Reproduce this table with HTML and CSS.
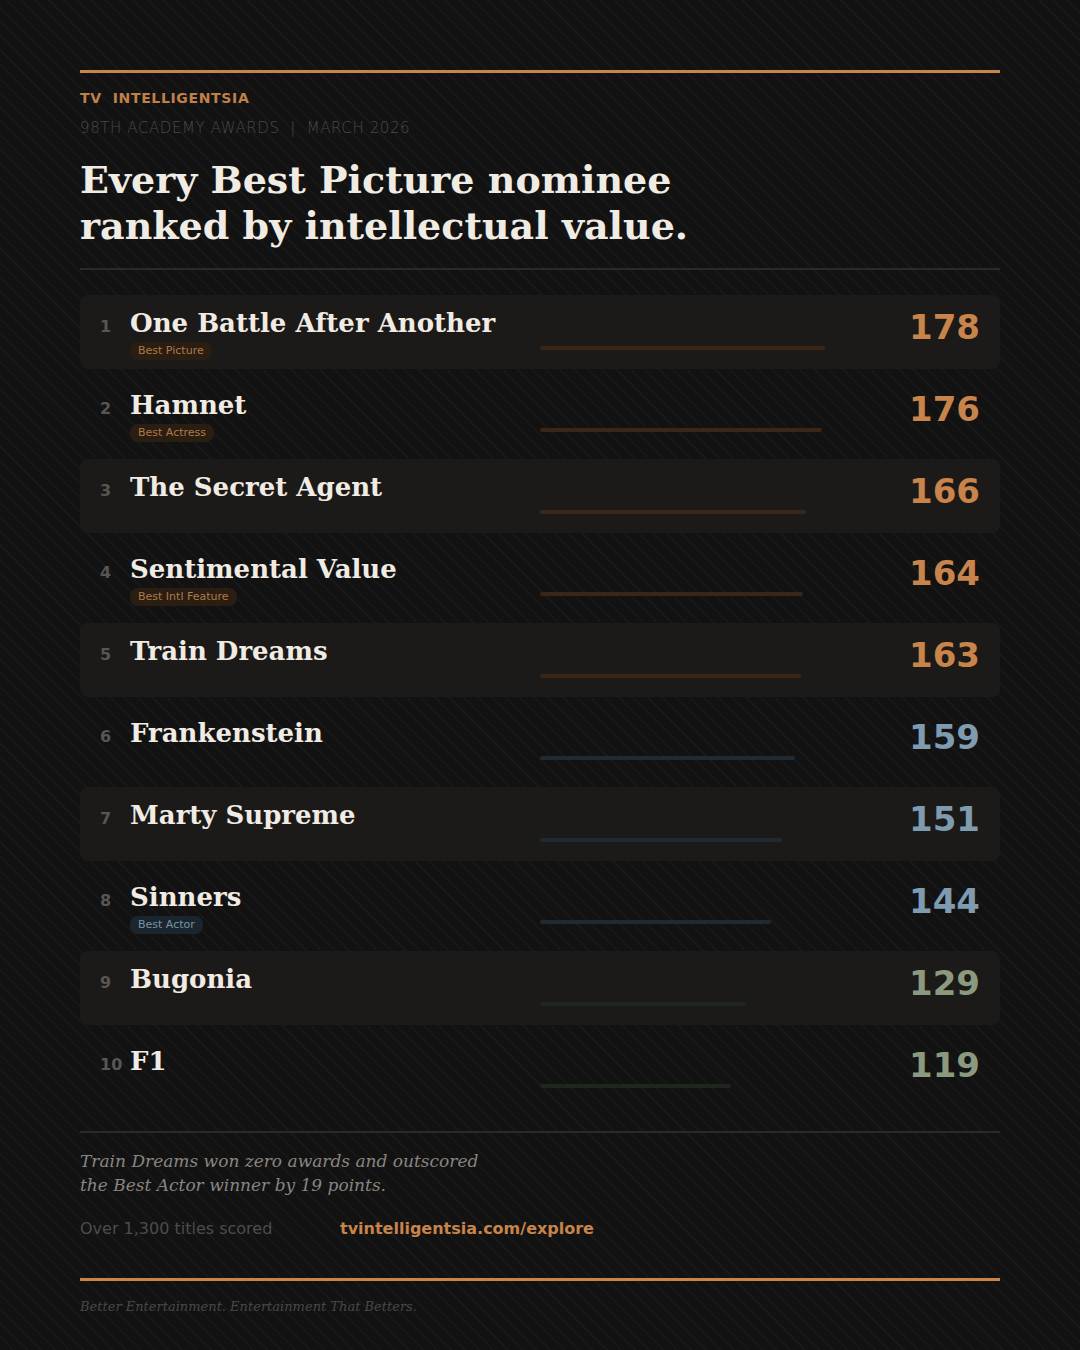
FILE: index.html
```html
<!DOCTYPE html>
<html>
<head>
<meta charset="utf-8">
<link rel="stylesheet" href="styles.css">
</head>
<body>
<div class="page">
  <div class="rule-top"></div>
  <div class="brand">TV&nbsp; INTELLIGENTSIA</div>
  <div class="sub">98TH ACADEMY AWARDS &nbsp;|&nbsp; MARCH 2026</div>
  <h1 class="title">Every Best Picture nominee<br>ranked by intellectual value.</h1>
  <div class="divider"></div>

  <div class="list">
    <div class="row shade">
      <div class="rank">1</div>
      <div class="name"><div class="film">One Battle After Another</div><span class="badge">Best Picture</span></div>
      <div class="bar-wrap"><div class="bar orange" style="width:285px"></div></div>
      <div class="score orange">178</div>
    </div>
    <div class="row">
      <div class="rank">2</div>
      <div class="name"><div class="film">Hamnet</div><span class="badge">Best Actress</span></div>
      <div class="bar-wrap"><div class="bar orange" style="width:282px"></div></div>
      <div class="score orange">176</div>
    </div>
    <div class="row shade">
      <div class="rank">3</div>
      <div class="name"><div class="film">The Secret Agent</div></div>
      <div class="bar-wrap"><div class="bar orange" style="width:266px"></div></div>
      <div class="score orange">166</div>
    </div>
    <div class="row">
      <div class="rank">4</div>
      <div class="name"><div class="film">Sentimental Value</div><span class="badge">Best Intl Feature</span></div>
      <div class="bar-wrap"><div class="bar orange" style="width:263px"></div></div>
      <div class="score orange">164</div>
    </div>
    <div class="row shade">
      <div class="rank">5</div>
      <div class="name"><div class="film">Train Dreams</div></div>
      <div class="bar-wrap"><div class="bar orange" style="width:261px"></div></div>
      <div class="score orange">163</div>
    </div>
    <div class="row">
      <div class="rank">6</div>
      <div class="name"><div class="film">Frankenstein</div></div>
      <div class="bar-wrap"><div class="bar blue" style="width:255px"></div></div>
      <div class="score blue">159</div>
    </div>
    <div class="row shade">
      <div class="rank">7</div>
      <div class="name"><div class="film">Marty Supreme</div></div>
      <div class="bar-wrap"><div class="bar blue" style="width:242px"></div></div>
      <div class="score blue">151</div>
    </div>
    <div class="row">
      <div class="rank">8</div>
      <div class="name"><div class="film">Sinners</div><span class="badge badge-blue">Best Actor</span></div>
      <div class="bar-wrap"><div class="bar blue" style="width:231px"></div></div>
      <div class="score blue">144</div>
    </div>
    <div class="row shade">
      <div class="rank">9</div>
      <div class="name"><div class="film">Bugonia</div></div>
      <div class="bar-wrap"><div class="bar green" style="width:206px"></div></div>
      <div class="score green">129</div>
    </div>
    <div class="row">
      <div class="rank">10</div>
      <div class="name"><div class="film">F1</div></div>
      <div class="bar-wrap"><div class="bar green" style="width:191px"></div></div>
      <div class="score green">119</div>
    </div>
  </div>

  <div class="divider foot-div"></div>
  <p class="note">Train Dreams won zero awards and outscored<br>the Best Actor winner by 19 points.</p>
  <div class="meta">
    <span class="count">Over 1,300 titles scored</span>
    <span class="link">tvintelligentsia.com/explore</span>
  </div>
  <div class="rule-bottom"></div>
  <p class="tagline">Better Entertainment. Entertainment That Betters.</p>
</div>
</body>
</html>
```

FILE: styles.css
```css
* { box-sizing: border-box; }
html, body {
  margin: 0;
  padding: 0;
}
body {
  width: 1080px;
  height: 1350px;
  background-color: #121212;
  background-image: repeating-linear-gradient(45deg, rgba(255,255,255,0) 0px, rgba(255,255,255,0) 8.5px, rgba(255,255,255,0.028) 8.5px, rgba(255,255,255,0.028) 10px);
  font-family: "DejaVu Sans", sans-serif;
  overflow: hidden;
}
.page {
  padding: 70px 80px 0 80px;
}
.rule-top, .rule-bottom {
  height: 3px;
  background: #c8844a;
}
.brand {
  margin-top: 16px;
  font-size: 14px;
  font-weight: bold;
  letter-spacing: 0.65px;
  color: #c0804a;
  line-height: 18px;
}
.sub {
  margin-top: 12px;
  font-size: 15px;
  font-weight: 200;
  letter-spacing: 0.6px;
  color: #4a4a4a;
  line-height: 18px;
}
.title {
  margin: 20px 0 0 0;
  font-family: "DejaVu Serif", serif;
  font-weight: bold;
  font-size: 38px;
  line-height: 46px;
  color: #f0ebe3;
}
.divider {
  margin-top: 19px;
  height: 2px;
  background: #2a2a2a;
}
.list {
  margin-top: 25px;
  display: flex;
  flex-direction: column;
  gap: 8px;
}
.row {
  height: 74px;
  border-radius: 8px;
  display: flex;
  align-items: flex-start;
  padding: 12px 20px 0 20px;
}
.row.shade {
  background: #1c1a18;
}
.rank {
  width: 30px;
  font-size: 16px;
  font-weight: bold;
  color: #585654;
  line-height: 39px;
}
.name {
  width: 410px;
}
.film {
  font-family: "DejaVu Serif", serif;
  font-weight: bold;
  font-size: 26px;
  line-height: 32px;
  color: #f0ebe3;
}
.badge {
  display: inline-block;
  margin-top: 2px;
  font-size: 11px;
  line-height: 18px;
  padding: 0 8px;
  border-radius: 8px;
  background: #2a1d12;
  color: #b07a48;
}
.badge-blue {
  background: #1b252d;
  color: #7a94a6;
}
.bar-wrap {
  flex: 1;
  margin-top: 39px;
}
.bar {
  height: 4px;
  border-radius: 2px;
}
.bar.orange { background: #3a2616; }
.bar.blue { background: #1f2a33; }
.bar.green { background: #1f261d; }
.score {
  font-size: 34px;
  font-weight: bold;
  line-height: 40px;
}
.score.orange { color: #c8844a; }
.score.blue { color: #7f9bb0; }
.score.green { color: #8b9a7e; }
.foot-div {
  margin-top: 24px;
}
.note {
  margin: 16px 0 0 0;
  font-family: "DejaVu Serif", serif;
  font-style: italic;
  font-size: 17px;
  line-height: 24px;
  color: #8a8580;
}
.meta {
  margin-top: 22px;
  display: flex;
  font-size: 16px;
  line-height: 20px;
}
.count {
  width: 260px;
  color: #4e4c4a;
}
.link {
  color: #c8844a;
  font-weight: bold;
}
.rule-bottom {
  margin-top: 39px;
}
.tagline {
  margin: 18px 0 0 0;
  font-family: "DejaVu Serif", serif;
  font-style: italic;
  font-size: 13px;
  line-height: 16px;
  color: #4a4846;
}
```
